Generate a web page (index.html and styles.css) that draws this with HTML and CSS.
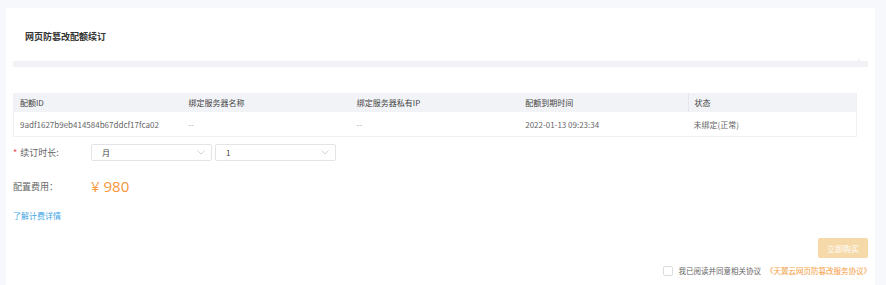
FILE: index.html
```html
<!DOCTYPE html>
<html lang="zh-CN">
<head>
  <meta charset="UTF-8" />
  <title>网页防篡改配额续订</title>
  <link rel="stylesheet" href="styles.css">
</head>
<body>
  <div class="card">
    <h1 class="title">网页防篡改配额续订</h1>
    <div class="tab-bar"></div>

    <!-- Quota table -->
    <div class="table">
      <div class="row head">
        <div class="cell">配额ID</div>
        <div class="cell">绑定服务器名称</div>
        <div class="cell">绑定服务器私有IP</div>
        <div class="cell">配额到期时间</div>
        <div class="cell divider">状态</div>
      </div>
      <div class="row">
        <div class="cell">9adf1627b9eb414584b67ddcf17fca02</div>
        <div class="cell muted">--</div>
        <div class="cell muted">--</div>
        <div class="cell">2022-01-13 09:23:34</div>
        <div class="cell">未绑定(正常)</div>
      </div>
    </div>

    <!-- Renewal form -->
    <div class="form-row period">
      <label class="label"><span class="req">*</span>续订时长:</label>
      <div class="select">
        <span>月</span>
        <svg width="8" height="5" viewBox="0 0 8 5"><path d="M0.5 0.5 L4 4 L7.5 0.5" fill="none" stroke="#c8c8c8" stroke-width="0.8"/></svg>
      </div>
      <div class="select">
        <span>1</span>
        <svg width="8" height="5" viewBox="0 0 8 5"><path d="M0.5 0.5 L4 4 L7.5 0.5" fill="none" stroke="#c8c8c8" stroke-width="0.8"/></svg>
      </div>
    </div>

    <div class="form-row fee">
      <label class="label">配置费用：</label>
      <span class="price">¥ 980</span>
    </div>

    <a class="link" href="#">了解计费详情</a>

    <div class="actions">
      <button class="buy">立即购买</button>
    </div>

    <div class="agree">
      <span class="checkbox"></span>
      <span>我已阅读并同意相关协议</span>
      <a href="#" class="agree-link">《天翼云网页防篡改服务协议》</a>
    </div>
  </div>
</body>
</html>
```

FILE: styles.css
```css
/* === Page === */
body {
  margin: 0;
  background: #f7f8fb;
  font-family: "Noto Sans CJK SC", "Noto Sans", sans-serif;
  color: #666;
  font-size: 8px;
  height: 285px;
  overflow: hidden;
}

.card {
  margin: 8px 11px 0 6px;
  background: #fff;
  padding: 23px 7px 0;
  height: 277px;
  box-sizing: border-box;
}

.title {
  margin: 0 0 0 12px;
  font-size: 9px;
  line-height: 12px;
  font-weight: bold;
  color: #333;
}

/* thin gray tab strip under the title */
.tab-bar {
  position: relative;
  margin-top: 18px;
  height: 6px;
  background: #f1f1f6;
}

.tab-bar::after {
  content: "";
  position: absolute;
  right: 6px;
  top: -3px;
  border-left: 4px solid #f1f1f6;
  border-top: 4px solid transparent;
  border-bottom: 4px solid transparent;
}

/* === Table === */
.table {
  margin: 26px 11px 0 0;
  border: 1px solid #f0f0f3;
  border-top: none;
}

.row {
  display: grid;
  grid-template-columns: repeat(5, 1fr);
  height: 24px;
  align-items: center;
}

.row.head {
  height: 19px;
  background: #f2f3f7;
  color: #444;
}

.cell {
  padding-left: 6px;
  line-height: 19px;
}

.cell.divider {
  border-left: 1px solid #e6e7ec;
  padding-left: 6px;
}

.muted {
  color: #aaa;
}

/* === Form === */
.form-row {
  display: flex;
  align-items: center;
}

.label {
  width: 78px;
  flex-shrink: 0;
  font-size: 9px;
  color: #666;
}

.req {
  color: #f04a4a;
  margin-right: 3px;
}

.period {
  margin-top: 7px;
  height: 17px;
}

.select {
  width: 121px;
  height: 17px;
  box-sizing: border-box;
  border: 1px solid #e4e4e8;
  border-radius: 2px;
  display: flex;
  align-items: center;
  justify-content: space-between;
  padding: 0 6px 0 10px;
  color: #444;
}

.select + .select {
  margin-left: 3px;
}

.fee {
  margin-top: 17px;
  height: 16px;
}

.price {
  font-family: "Open Sans", "Noto Sans CJK SC", sans-serif;
  font-size: 15px;
  color: #f8953a;
  line-height: 16px;
}

.link {
  display: block;
  margin-top: 16px;
  line-height: 12px;
  color: #3ea6e6;
  text-decoration: none;
}

/* === Footer actions === */
.actions {
  display: flex;
  justify-content: flex-end;
  margin-top: 16px;
}

.buy {
  width: 50px;
  height: 20px;
  border: none;
  border-radius: 2px;
  background: #f6d9a8;
  color: #fff;
  font-family: inherit;
  font-size: 8px;
  padding: 0;
}

.agree {
  display: flex;
  justify-content: flex-end;
  align-items: center;
  margin: 7px -3px 0 0;
  line-height: 12px;
  font-size: 7.5px;
  gap: 5px;
}

.checkbox {
  width: 8px;
  height: 8px;
  border: 1px solid #dcdcdf;
  border-radius: 2px;
  margin-right: 1px;
}

.agree-link {
  color: #f59a3d;
  text-decoration: none;
}
```
